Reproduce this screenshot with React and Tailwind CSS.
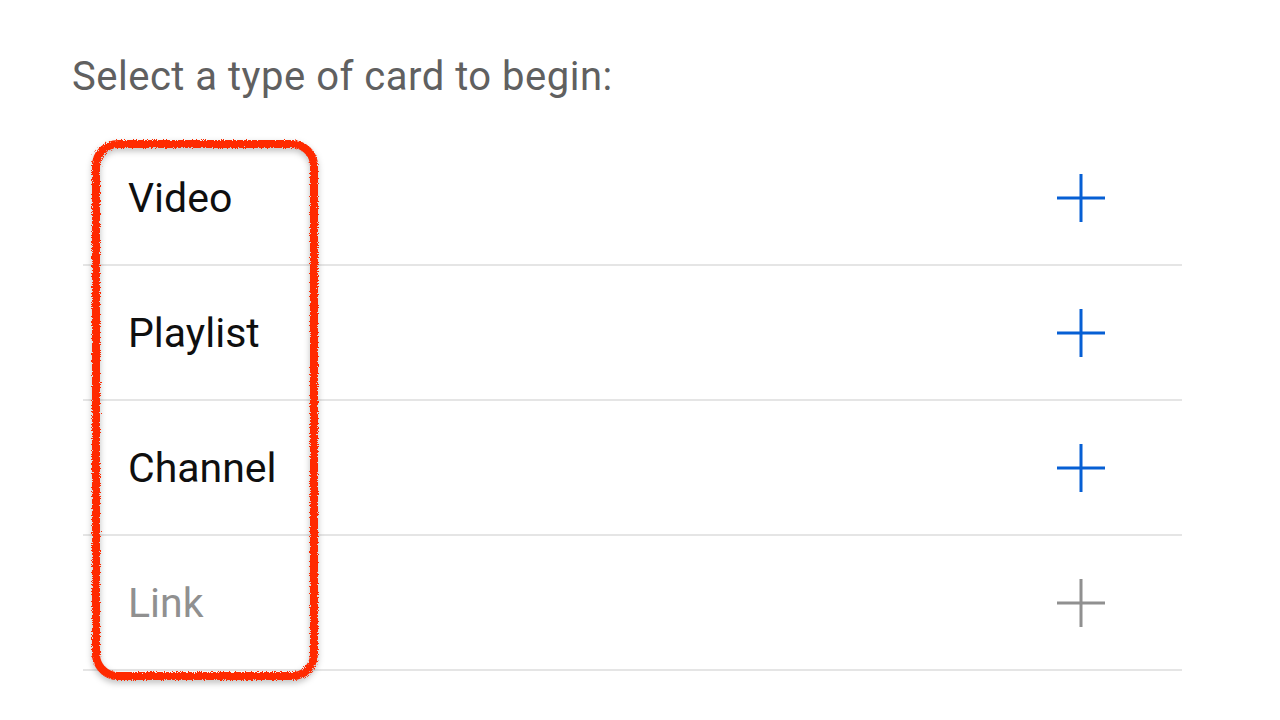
import React from "react";

const rows = [
  { label: "Video", active: true },
  { label: "Playlist", active: true },
  { label: "Channel", active: true },
  { label: "Link", active: false },
];

function Plus({ color }) {
  return (
    <svg width="48" height="48" viewBox="0 0 48 48" className="shrink-0">
      <path d="M24 0V48M0 24H48" stroke={color} strokeWidth="3" fill="none" />
    </svg>
  );
}

export default function App() {
  return (
    <div
      className="relative w-[1280px] h-[720px] bg-white overflow-hidden"
      style={{ fontFamily: "Roboto, 'Noto Sans', sans-serif" }}
    >
      <div className="pl-[72px] pt-[53px]">
        <div className="text-[40px] leading-[48px] tracking-[0.5px] text-[#606060]">
          Select a type of card to begin:
        </div>
      </div>
      <div className="ml-[83px] mt-[30px] w-[1099px] flex flex-col">
        {rows.map((r) => (
          <div
            key={r.label}
            className="h-[135px] flex items-center justify-between pl-[45px] pr-[77px] border-b-2 border-[#e5e5e5]"
          >
            <span
              className={
                "text-[41px] leading-[48px] " +
                (r.active ? "text-[#0f0f0f]" : "text-[#909090]")
              }
            >
              {r.label}
            </span>
            <Plus color={r.active ? "#065fd4" : "#909090"} />
          </div>
        ))}
      </div>
      <svg
        className="absolute left-0 top-0 pointer-events-none"
        width="1280"
        height="720"
      >
        <defs>
          <filter id="rough" x="-10%" y="-10%" width="120%" height="120%">
            <feTurbulence type="fractalNoise" baseFrequency="0.9" numOctaves="2" result="n" />
            <feDisplacementMap in="SourceGraphic" in2="n" scale="5" />
          </filter>
          <filter id="shadow" x="-10%" y="-10%" width="120%" height="120%">
            <feGaussianBlur stdDeviation="3" />
          </filter>
        </defs>
        <rect
          x="96"
          y="147"
          width="218"
          height="532"
          rx="22"
          fill="none"
          stroke="rgba(0,0,0,0.25)"
          strokeWidth="8"
          filter="url(#shadow)"
        />
        <rect
          x="96"
          y="144"
          width="218"
          height="532"
          rx="22"
          fill="none"
          stroke="#ff2a00"
          strokeWidth="8"
          filter="url(#rough)"
        />
      </svg>
    </div>
  );
}
